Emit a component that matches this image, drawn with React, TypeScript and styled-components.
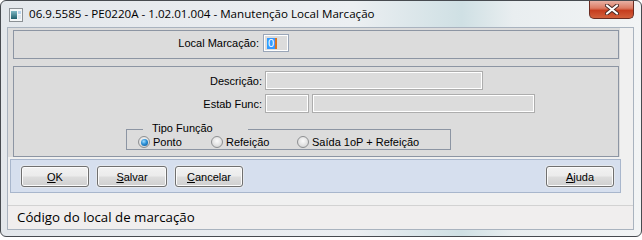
import React, { FC } from 'react';
import styled, { createGlobalStyle } from 'styled-components';

const GlobalStyle = createGlobalStyle`
  html, body {
    margin: 0;
    padding: 0;
    background: #ffffff;
  }
  body {
    font-family: "Liberation Sans", Arial, sans-serif;
  }
`

const WindowStyle = styled.div`
  width: 642px;
  height: 237px;
  box-sizing: border-box;
  border: 1px solid #474b50;
  border-radius: 6px;
  padding: 0 7px 6px 6px;
  display: flex;
  flex-direction: column;
  background: linear-gradient(90deg, #e3e7eb 0%, #eceff2 55%, #cfe0e4 72%, #e9eef0 80%, #f2f4f5 100%);
  overflow: hidden;
`

const TitleBar = styled.div`
  height: 26px;
  display: flex;
  align-items: flex-start;
  flex-shrink: 0;
`

const TitleIcon = styled.svg`
  margin: 7px 0 0 2px;
  flex-shrink: 0;
`

const TitleText = styled.span`
  margin: 5px 0 0 6px;
  font-family: "Open Sans", "Noto Sans", sans-serif;
  font-size: 11.6px;
  line-height: 16px;
  color: #000;
  white-space: nowrap;
`

const CloseButton = styled.div`
  margin-left: auto;
  width: 45px;
  height: 18px;
  box-sizing: border-box;
  border: 1px solid #6a2c22;
  border-top: 0;
  border-radius: 0 0 5px 5px;
  background: linear-gradient(180deg, #e8b1a4 0%, #dc7b63 42%, #c63d1f 56%, #d2603c 100%);
  display: flex;
  align-items: center;
  justify-content: center;
`

const Client = styled.div`
  flex: 1;
  border: 1px solid #a9b3bf;
  background: #f0f0f0;
  display: flex;
  flex-direction: column;
`

const FormArea = styled.div`
  width: 612px;
  height: 129px;
  box-sizing: border-box;
  background: #dcdcdc;
  padding: 2px 1px 0 5px;
`

const Panel = styled.div<{ $height: number }>`
  height: ${p => p.$height}px;
  box-sizing: border-box;
  border: 1px solid #8c95a3;
`

const TopPanel = styled(Panel)`
  padding-top: 3px;
  margin-bottom: 7px;
  display: flex;
  align-items: flex-start;
`

const MainPanel = styled(Panel)`
  padding-top: 4px;
`

const FieldRow = styled.div`
  display: flex;
  align-items: center;
  gap: 3px;
  height: 19px;
  margin-bottom: 4px;
`

const Label = styled.span<{ $width: number }>`
  width: ${p => p.$width}px;
  text-align: right;
  font-size: 11px;
  line-height: 18px;
  color: #000;
  white-space: nowrap;
  flex-shrink: 0;
`

const TextBox = styled.div<{ $width: number; $height?: number }>`
  width: ${p => p.$width}px;
  height: ${p => p.$height ?? 19}px;
  box-sizing: border-box;
  border: 1px solid #adadad;
  box-shadow: inset 0 0 0 1px #ffffff;
  background: #dcdcdc;
  flex-shrink: 0;
`

const CodeBox = styled(TextBox)`
  margin-left: 4px;
  border-color: #9aa6b8;
  display: flex;
  align-items: center;
  padding-left: 3px;
`

const Selected = styled.span`
  background: #3399ff;
  color: #ffffff;
  font-size: 11px;
  line-height: 11px;
  padding: 0 1px;
`

const Caret = styled.span`
  width: 2px;
  height: 11px;
  background: #d9731f;
`

const GroupBox = styled.div`
  position: relative;
  margin: 16px 0 0 112px;
  width: 325px;
  height: 21px;
  box-sizing: border-box;
  border: 1px solid #8c95a3;
  padding: 6px 0 0 11px;
  display: flex;
`

const Legend = styled.span`
  position: absolute;
  top: -8px;
  left: 16px;
  width: 105px;
  box-sizing: border-box;
  padding-left: 9px;
  background: #dcdcdc;
  font-size: 11px;
  line-height: 13px;
  color: #000;
`

const RadioItem = styled.label<{ $width?: number }>`
  display: flex;
  align-items: center;
  gap: 3px;
  height: 12px;
  ${p => (p.$width ? `width: ${p.$width}px;` : '')}
  font-size: 11px;
  color: #000;
  white-space: nowrap;
`

const RadioCircle = styled.span<{ $checked?: boolean }>`
  width: 12px;
  height: 12px;
  box-sizing: border-box;
  border-radius: 50%;
  border: 1px solid #8e9092;
  background: radial-gradient(circle at 50% 40%, #fbfbfb 0%, #e2e2e2 55%, #c9c9c9 100%);
  display: flex;
  align-items: center;
  justify-content: center;
  flex-shrink: 0;

  &::after {
    content: '';
    display: ${p => (p.$checked ? 'block' : 'none')};
    width: 7px;
    height: 7px;
    border-radius: 50%;
    background: radial-gradient(circle at 40% 35%, #9fdcff 0%, #2a8fd6 45%, #0b4f8c 100%);
  }
`

const ButtonBar = styled.div`
  margin: 2px 0 0 2px;
  width: 611px;
  height: 34px;
  box-sizing: border-box;
  background: #d6dfee;
  border: 1px solid #a8b6cc;
  padding: 6px 6px 0 10px;
  display: flex;
  align-items: flex-start;
  gap: 8px;
`

const Button = styled.button<{ $width: number; $right?: boolean }>`
  width: ${p => p.$width}px;
  height: 21px;
  box-sizing: border-box;
  margin: 0;
  ${p => (p.$right ? 'margin-left: auto;' : '')}
  padding: 0;
  border: 1px solid #707070;
  border-radius: 3px;
  background: linear-gradient(180deg, #f2f2f2 0%, #ebebeb 48%, #dddddd 52%, #cfcfcf 100%);
  box-shadow: inset 0 0 0 1px #fbfbfb, 0 0 0 1px #e4e8ee;
  font-family: "Liberation Sans", Arial, sans-serif;
  font-size: 11px;
  color: #000;

  & > u {
    text-decoration-thickness: 1px;
  }
`

const StatusBar = styled.div`
  margin-top: 12px;
  height: 24px;
  box-sizing: border-box;
  border-top: 1px solid #d2d2d2;
  background: #f0eeee;
  padding-left: 9px;
  font-family: "Open Sans", "Noto Sans", sans-serif;
  font-size: 13.3px;
  line-height: 22px;
  color: #000;
`

const radios = [
  { text: 'Ponto', width: 73, checked: true },
  { text: 'Refeição', width: 86 },
  { text: 'Saída 1oP + Refeição' },
]

const App: FC = () => {
  return <>
    <GlobalStyle />
    <WindowStyle>
      <TitleBar>
        <TitleIcon width="14" height="14" viewBox="0 0 14 14">
          <defs>
            <linearGradient id="ico" x1="0" y1="0" x2="0" y2="1">
              <stop offset="0" stopColor="#7fb8c4" />
              <stop offset="1" stopColor="#1f5f6c" />
            </linearGradient>
          </defs>
          <rect x="0.5" y="0.5" width="13" height="13" fill="#f4f6f7" stroke="#8b9094" />
          <rect x="2" y="3" width="6" height="8" fill="url(#ico)" />
          <rect x="9" y="3" width="3" height="3" fill="#b9d3ea" />
          <rect x="9" y="7" width="3" height="4" fill="#dde6ee" />
        </TitleIcon>
        <TitleText>06.9.5585 - PE0220A - 1.02.01.004 - Manutenção Local Marcação</TitleText>
        <CloseButton>
          <svg width="14" height="11" viewBox="0 0 14 11">
            <path d="M2 1.5 L12 9.5 M12 1.5 L2 9.5" stroke="#4a2a26" strokeWidth="4" strokeLinecap="round" />
            <path d="M2 1.5 L12 9.5 M12 1.5 L2 9.5" stroke="#ffffff" strokeWidth="2.2" strokeLinecap="round" />
          </svg>
        </CloseButton>
      </TitleBar>
      <Client>
        <FormArea>
          <TopPanel $height={29}>
            <Label $width={245}>Local Marcação:</Label>
            <CodeBox $width={26} $height={18}>
              <Selected>0</Selected>
              <Caret />
            </CodeBox>
          </TopPanel>
          <MainPanel $height={91}>
            <FieldRow>
              <Label $width={248}>Descrição:</Label>
              <TextBox $width={218} />
            </FieldRow>
            <FieldRow>
              <Label $width={248}>Estab Func:</Label>
              <TextBox $width={44} />
              <TextBox $width={223} />
            </FieldRow>
            <GroupBox>
              <Legend>Tipo Função</Legend>
              {radios.map(r => (
                <RadioItem key={r.text} $width={r.width}>
                  <RadioCircle $checked={r.checked} />
                  {r.text}
                </RadioItem>
              ))}
            </GroupBox>
          </MainPanel>
        </FormArea>
        <ButtonBar>
          <Button $width={68}><u>O</u>K</Button>
          <Button $width={70}><u>S</u>alvar</Button>
          <Button $width={68}><u>C</u>ancelar</Button>
          <Button $width={68} $right><u>A</u>juda</Button>
        </ButtonBar>
        <StatusBar>Código do local de marcação</StatusBar>
      </Client>
    </WindowStyle>
  </>
}

export default App
